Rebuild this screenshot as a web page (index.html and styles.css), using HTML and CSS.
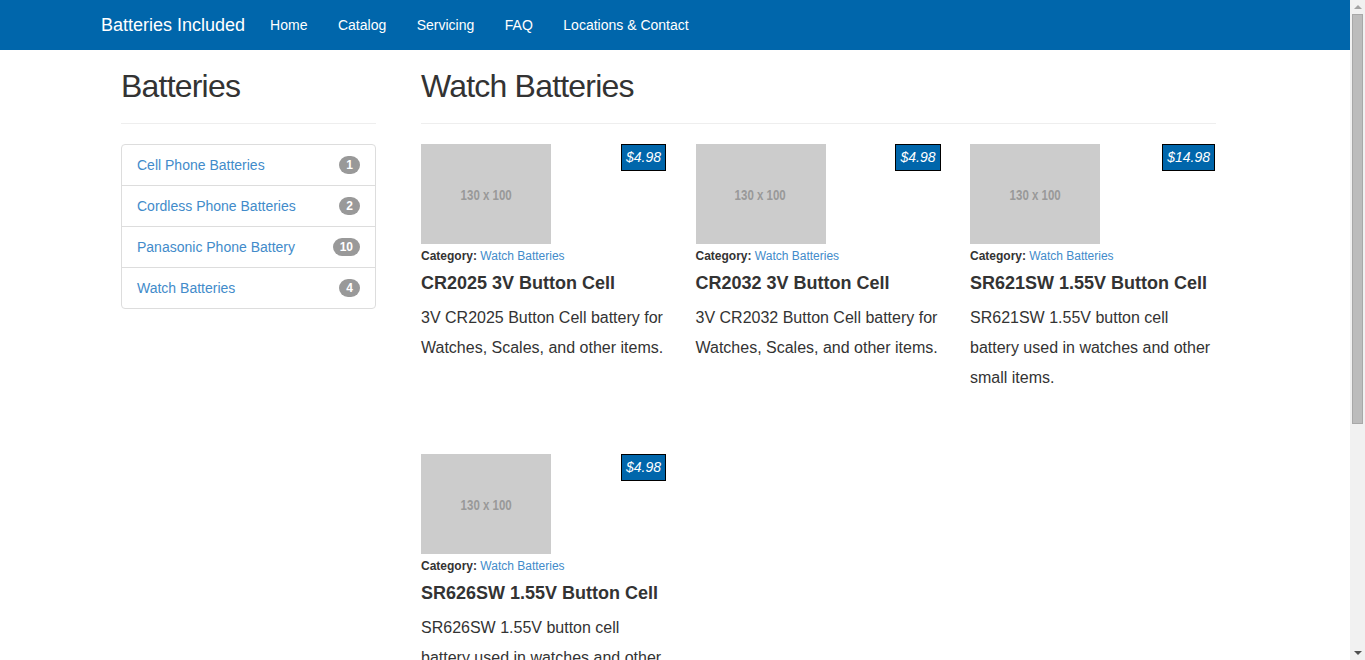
FILE: index.html
```html
<!DOCTYPE html>
<html lang="en">
<head>
<meta charset="utf-8">
<title>Watch Batteries - Batteries Included</title>
<link rel="stylesheet" href="styles.css">
</head>
<body>
<nav class="navbar">
  <div class="nav-inner">
    <a class="brand" href="#">Batteries Included</a>
    <ul class="nav-links">
      <li><a href="#">Home</a></li>
      <li><a href="#">Catalog</a></li>
      <li><a href="#">Servicing</a></li>
      <li><a href="#">FAQ</a></li>
      <li><a href="#">Locations &amp; Contact</a></li>
    </ul>
  </div>
</nav>
<div class="page">
  <aside class="sidebar">
    <div class="page-header"><h1>Batteries</h1></div>
    <ul class="list-group">
      <li class="list-item"><a href="#">Cell Phone Batteries</a><span class="badge">1</span></li>
      <li class="list-item"><a href="#">Cordless Phone Batteries</a><span class="badge">2</span></li>
      <li class="list-item"><a href="#">Panasonic Phone Battery</a><span class="badge">10</span></li>
      <li class="list-item"><a href="#">Watch Batteries</a><span class="badge">4</span></li>
    </ul>
  </aside>
  <main class="main">
    <div class="page-header"><h1>Watch Batteries</h1></div>
    <div class="products">
      <div class="product">
        <div class="thumb"><span>130 x 100</span></div>
        <span class="price">$4.98</span>
        <div class="category"><b>Category:</b> <a href="#">Watch Batteries</a></div>
        <h3 class="title">CR2025 3V Button Cell</h3>
        <p class="desc">3V CR2025 Button Cell battery for Watches, Scales, and other items.</p>
      </div>
      <div class="product">
        <div class="thumb"><span>130 x 100</span></div>
        <span class="price">$4.98</span>
        <div class="category"><b>Category:</b> <a href="#">Watch Batteries</a></div>
        <h3 class="title">CR2032 3V Button Cell</h3>
        <p class="desc">3V CR2032 Button Cell battery for Watches, Scales, and other items.</p>
      </div>
      <div class="product">
        <div class="thumb"><span>130 x 100</span></div>
        <span class="price">$14.98</span>
        <div class="category"><b>Category:</b> <a href="#">Watch Batteries</a></div>
        <h3 class="title">SR621SW 1.55V Button Cell</h3>
        <p class="desc">SR621SW 1.55V button cell battery used in watches and other small items.</p>
      </div>
      <div class="product">
        <div class="thumb"><span>130 x 100</span></div>
        <span class="price">$4.98</span>
        <div class="category"><b>Category:</b> <a href="#">Watch Batteries</a></div>
        <h3 class="title">SR626SW 1.55V Button Cell</h3>
        <p class="desc">SR626SW 1.55V button cell battery used in watches and other small items.</p>
      </div>
    </div>
  </main>
</div>
<div class="scrollbar" aria-hidden="true">
  <div class="sb-arrow sb-up"></div>
  <div class="sb-track"><div class="sb-thumb"></div></div>
  <div class="sb-arrow sb-down"></div>
</div>
</body>
</html>
```
FILE: styles.css
```css
* { box-sizing: border-box; }
html, body { margin: 0; padding: 0; }
html { overflow: hidden; }
body {
  margin-right: 15px;
  font-family: "Liberation Sans", Arial, Helvetica, sans-serif;
  font-size: 14px;
  line-height: 20px;
  color: #333;
  background: #fff;
}
a { color: #428bca; text-decoration: none; }

.navbar { background: #0066ab; height: 50px; }
.nav-inner {
  width: 1170px;
  margin: 0 auto;
  padding-left: 11px;
  display: flex;
  align-items: center;
  height: 50px;
}
.brand {
  color: #fff;
  font-size: 18px;
  line-height: 20px;
  padding: 15px 10px 15px 0;
}
.nav-links { list-style: none; margin: 0; padding: 0; display: flex; }
.nav-links a {
  display: block;
  color: #fff;
  padding: 15px 15.25px;
  line-height: 20px;
}
.nav-links li:first-child a { padding-left: 15px; }

.page {
  width: 1170px;
  margin: 0 auto;
  padding: 0 0 270px 31px;
  display: grid;
  grid-template-columns: 255px 795px;
  column-gap: 45px;
  align-items: start;
}
.page-header {
  padding: 19px 0 19px;
  border-bottom: 1px solid #eee;
  margin-bottom: 20px;
}
.page-header h1 {
  margin: 0;
  font-size: 32px;
  line-height: 35px;
  letter-spacing: -0.8px;
  font-weight: 500;
}

.list-group { list-style: none; margin: 0; padding: 0; }
.list-item {
  display: flex;
  justify-content: space-between;
  align-items: center;
  padding: 10px 15px;
  border: 1px solid #ddd;
  margin-bottom: -1px;
  line-height: 20px;
}
.list-item:first-child { border-radius: 4px 4px 0 0; }
.list-item:last-child { border-radius: 0 0 4px 4px; }
.badge {
  background: #999;
  color: #fff;
  font-size: 12px;
  font-weight: bold;
  line-height: 12px;
  padding: 3px 7px;
  border-radius: 10px;
  min-width: 10px;
  text-align: center;
}

.products {
  display: grid;
  grid-template-columns: repeat(3, 245px);
  column-gap: 29.5px;
  row-gap: 20px;
}
.product { position: relative; height: 290px; }
.thumb {
  width: 130px;
  height: 100px;
  background: #ccc;
  color: #999;
  font-size: 14px;
  font-weight: bold;
  display: flex;
  align-items: center;
  justify-content: center;
  padding-top: 2px;
}
.thumb span {
  display: inline-block;
  transform: scaleX(0.82);
}
.price {
  position: absolute;
  top: 0;
  right: 0;
  background: #0066ab;
  color: #fff;
  border: 1px solid #000;
  font-style: italic;
  font-size: 14px;
  line-height: 19px;
  padding: 3px 4px 3px 4px;
}
.category {
  margin-top: 4px;
  font-size: 12px;
  line-height: 17px;
}
.title {
  margin: 8px 0 0;
  font-size: 18px;
  line-height: 20px;
  font-weight: bold;
}
.desc {
  margin: 10px 0 0;
  font-size: 16px;
  line-height: 30px;
}

.scrollbar {
  position: fixed;
  top: 0;
  right: 0;
  width: 15px;
  height: 660px;
  background: #f1f1f1;
  display: flex;
  flex-direction: column;
}
.sb-arrow { height: 14px; position: relative; }
.sb-arrow::after {
  content: "";
  position: absolute;
  left: 4px;
  border-left: 4px solid transparent;
  border-right: 4px solid transparent;
}
.sb-up::after { top: 5px; border-bottom: 4px solid #a3a3a3; }
.sb-down::after { top: 5px; border-top: 4px solid #505050; }
.sb-track { flex: 1; padding: 0 2px; }
.sb-thumb {
  height: 410px;
  background: #bcbcbc;
  border: 1px solid #a8a8a8;
}
```
